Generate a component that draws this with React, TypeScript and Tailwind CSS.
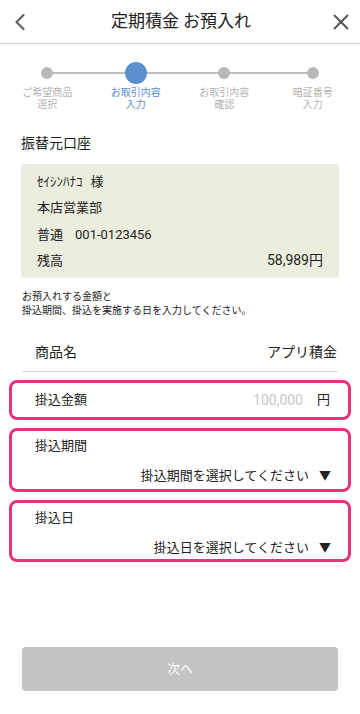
import { ChevronLeft, X } from 'lucide-react';

const steps = [
    { label: ['ご希望商品', '選択'], active: false },
    { label: ['お取引内容', '入力'], active: true },
    { label: ['お取引内容', '確認'], active: false },
    { label: ['暗証番号', '入力'], active: false },
];

function Stepper() {
    return (
        <div className="relative mt-[18px] grid grid-cols-4 px-[3px]">
            <div className="absolute left-[47px] right-[48px] top-[10px] h-[2px] bg-[#bdbdbd]" />
            {steps.map((s, i) => (
                <div key={i} className="relative flex flex-col items-center">
                    <div className="flex h-[22px] items-center justify-center">
                        {s.active ? (
                            <div className="h-[22px] w-[22px] rounded-full bg-[#5b8fcf]" />
                        ) : (
                            <div className="h-[12px] w-[12px] rounded-full bg-[#b8b8b8]" />
                        )}
                    </div>
                    <div
                        className={`mt-[3px] text-center text-[10px] leading-[12px] ${
                            s.active ? 'text-[#5b8fcf]' : 'text-[#b3b3b3]'
                        }`}
                    >
                        {s.label[0]}
                        <br />
                        {s.label[1]}
                    </div>
                </div>
            ))}
        </div>
    );
}

export default function App() {
    return (
        <div
            className="min-h-[714px] w-[360px] bg-white text-[#222]"
            style={{ fontFamily: 'Roboto, "Noto Sans CJK JP", sans-serif' }}
        >
            <header className="flex h-[44px] items-center justify-between border-b border-[#cfcfcf] px-[6px]">
                <ChevronLeft size={28} strokeWidth={2} className="text-[#666]" />
                <h1 className="text-[17px] text-[#222]">定期積金 お預入れ</h1>
                <X size={26} strokeWidth={1.8} className="text-[#555]" />
            </header>

            <Stepper />

            <h2 className="mt-[22px] px-[21px] text-[14px] leading-[20px]">振替元口座</h2>

            <div className="mx-[21px] mt-[11px] rounded-[4px] bg-[#ebeedf] px-[16px] py-[4px] text-[13px]">
                <div className="flex h-[26.5px] items-center gap-[8px]">
                    <span>ｾｲｼﾝﾊﾅｺ</span>
                    <span>様</span>
                </div>
                <div className="flex h-[26.5px] items-center">本店営業部</div>
                <div className="flex h-[26.5px] items-center gap-[12px]">
                    <span>普通</span>
                    <span>001-0123456</span>
                </div>
                <div className="flex h-[26.5px] items-center justify-between">
                    <span>残高</span>
                    <span className="text-[14px]">58,989円</span>
                </div>
            </div>

            <p className="mt-[12px] px-[22px] text-[10px] leading-[14px]">
                お預入れする金額と
                <br />
                掛込期間、掛込を実施する日を入力してください。
            </p>

            <div className="mx-[22px] mt-[16px] flex h-[38px] items-center justify-between border-b border-[#d8d8d8] pl-[13px] pr-[1px] text-[14px]">
                <span>商品名</span>
                <span>アプリ積金</span>
            </div>

            <div className="mx-[9px] mt-[8px] flex flex-col gap-[8px] text-[13px]">
                <div className="flex h-[40px] items-center rounded-[8px] border-[3px] border-[#e8317b] pl-[23px] pr-[18px]">
                    <span className="flex-1">掛込金額</span>
                    <span className="text-[14px] text-[#c8c8c8]">100,000</span>
                    <span className="ml-[14px]">円</span>
                </div>
                <div className="flex h-[64px] flex-col rounded-[8px] border-[3px] border-[#e8317b] pl-[23px] pr-[17px]">
                    <span className="mt-[6px] leading-[18px]">掛込期間</span>
                    <div className="mt-[12px] flex items-center justify-end gap-[10px] leading-[18px]">
                        <span>掛込期間を選択してください</span>
                        <span className="text-[12px]">▼</span>
                    </div>
                </div>
                <div className="flex h-[62px] flex-col rounded-[8px] border-[3px] border-[#e8317b] pl-[23px] pr-[17px]">
                    <span className="mt-[6px] leading-[18px]">掛込日</span>
                    <div className="mt-[12px] flex items-center justify-end gap-[10px] leading-[18px]">
                        <span>掛込日を選択してください</span>
                        <span className="text-[12px]">▼</span>
                    </div>
                </div>
            </div>

            <button className="mx-[22px] mt-[85px] flex h-[44px] w-[316px] items-center justify-center rounded-[4px] bg-[#c4c4c4] text-[13px] text-white">
                次へ
            </button>
        </div>
    );
}
